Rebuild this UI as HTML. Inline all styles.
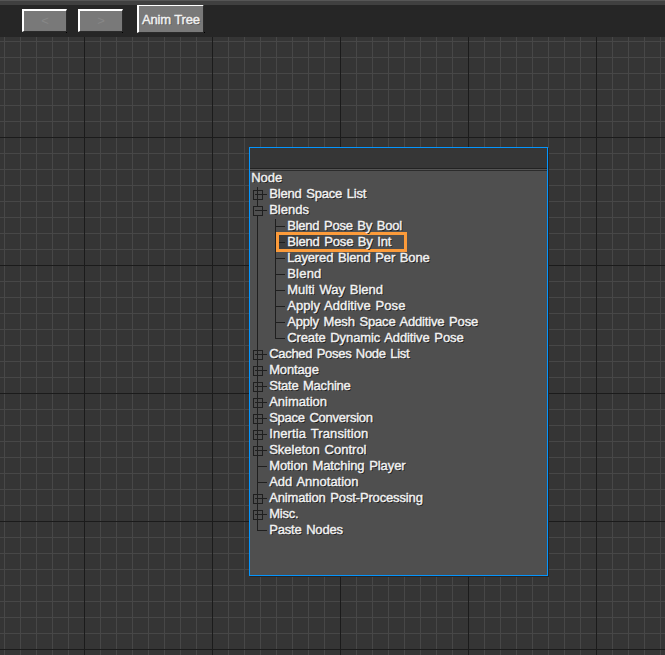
<!DOCTYPE html>
<html><head><meta charset="utf-8"><title>Anim Tree</title>
<style>
html,body{margin:0;padding:0}
body{width:665px;height:655px;overflow:hidden;position:relative;background:#353535;font-family:"Liberation Sans",sans-serif;font-size:13px;}
#grid{position:absolute;left:0;top:37px;width:665px;height:618px;background-color:#353535;
background-image:
 linear-gradient(to right,#1b1b1b 1px,transparent 1px),
 linear-gradient(to bottom,#1b1b1b 1px,transparent 1px),
 linear-gradient(to right,#474747 1px,transparent 1px),
 linear-gradient(to bottom,#474747 1px,transparent 1px);
background-size:128px 128px,128px 128px,16px 16px,16px 16px;
background-position:84px 0,0 100px,4px 0,0 4px;}
#bar{position:absolute;left:0;top:0;width:665px;height:37px;background:#262626}
#bar .s0{position:absolute;left:0;top:0;width:665px;height:1px;background:#565656}
#bar .s1{position:absolute;left:0;top:1px;width:665px;height:4px;background:#404040}
.btn{position:absolute;box-sizing:border-box;background:#797979;border-style:solid;border-color:#fff #2b2b2b #2b2b2b #fff;border-width:2px 1px 1px 2px;color:#878787;text-align:center;line-height:20px;font-size:13px}
.dot{position:absolute;width:1px;height:1px;background:#000}
#panel{position:absolute;left:249px;top:147px;width:297px;height:427px;border:1px solid #0495fe;background:#4f4f4f;box-shadow:1px 1px 0 #252525}
#field{position:absolute;left:250px;top:148px;width:297px;height:20px;background:#363636}
i{position:absolute;display:block;box-sizing:content-box}
.t{position:absolute;height:16px;line-height:16px;white-space:pre;color:#f2f2f2;text-shadow:1px 1px 0 #1c1c1c;-webkit-text-stroke:0.4px #f2f2f2}
.sel{position:absolute;border:3px solid #fc9b3a}
.selbg{position:absolute;background:linear-gradient(100deg,#3b3b3b,#4e4e4e 60%)}
</style></head><body>
<div id="grid"></div>
<div id="bar">
<div class="btn" style="left:22px;top:9px;width:45px;height:23px">&lt;</div>
<div class="btn" style="left:78px;top:9px;width:45px;height:23px">&gt;</div>
<div class="btn" style="left:137px;top:4px;width:67px;height:29px"></div>
<div class="dot" style="left:66px;top:32px"></div><div class="dot" style="left:122px;top:32px"></div><div class="dot" style="left:204px;top:32px"></div>
<div class="t" style="left:142px;top:12px;letter-spacing:-0.15px;text-shadow:1px 1px 0 #5a5a5a">Anim Tree</div>
<div class="s0"></div><div class="s1"></div>
</div>
<div id="panel"></div>
<div id="field"></div>
<i style="left:250px;top:168px;width:297px;height:1px;background:#222"></i>
<i style="left:250px;top:169px;width:297px;height:1px;background:#555"></i>
<i style="left:250px;top:170px;width:297px;height:1px;background:#2b2b2b"></i>
<div class="selbg" style="left:276px;top:232px;width:131px;height:20px"></div>
<i style="left:257px;top:187px;width:1px;height:344px;background:#1f1f1f;"></i><i style="left:275px;top:219px;width:1px;height:120px;background:#1f1f1f;"></i><i style="left:253px;top:190px;width:8px;height:8px;border:1px solid #1f1f1f;background:transparent"></i><i style="left:255px;top:194px;width:12px;height:1px;background:#1f1f1f;"></i><i style="left:253px;top:206px;width:8px;height:8px;border:1px solid #1f1f1f;background:#4f4f4f"></i><i style="left:255px;top:210px;width:12px;height:1px;background:#1f1f1f;"></i><i style="left:275px;top:226px;width:10px;height:1px;background:#1f1f1f;"></i><i style="left:275px;top:242px;width:10px;height:1px;background:#1f1f1f;"></i><i style="left:275px;top:258px;width:10px;height:1px;background:#1f1f1f;"></i><i style="left:275px;top:274px;width:10px;height:1px;background:#1f1f1f;"></i><i style="left:275px;top:290px;width:10px;height:1px;background:#1f1f1f;"></i><i style="left:275px;top:306px;width:10px;height:1px;background:#1f1f1f;"></i><i style="left:275px;top:322px;width:10px;height:1px;background:#1f1f1f;"></i><i style="left:275px;top:338px;width:10px;height:1px;background:#1f1f1f;"></i><i style="left:253px;top:350px;width:8px;height:8px;border:1px solid #1f1f1f;background:transparent"></i><i style="left:255px;top:354px;width:12px;height:1px;background:#1f1f1f;"></i><i style="left:253px;top:366px;width:8px;height:8px;border:1px solid #1f1f1f;background:transparent"></i><i style="left:255px;top:370px;width:12px;height:1px;background:#1f1f1f;"></i><i style="left:253px;top:382px;width:8px;height:8px;border:1px solid #1f1f1f;background:transparent"></i><i style="left:255px;top:386px;width:12px;height:1px;background:#1f1f1f;"></i><i style="left:253px;top:398px;width:8px;height:8px;border:1px solid #1f1f1f;background:transparent"></i><i style="left:255px;top:402px;width:12px;height:1px;background:#1f1f1f;"></i><i style="left:253px;top:414px;width:8px;height:8px;border:1px solid #1f1f1f;background:transparent"></i><i style="left:255px;top:418px;width:12px;height:1px;background:#1f1f1f;"></i><i style="left:253px;top:430px;width:8px;height:8px;border:1px solid #1f1f1f;background:transparent"></i><i style="left:255px;top:434px;width:12px;height:1px;background:#1f1f1f;"></i><i style="left:253px;top:446px;width:8px;height:8px;border:1px solid #1f1f1f;background:transparent"></i><i style="left:255px;top:450px;width:12px;height:1px;background:#1f1f1f;"></i><i style="left:257px;top:466px;width:10px;height:1px;background:#1f1f1f;"></i><i style="left:257px;top:482px;width:10px;height:1px;background:#1f1f1f;"></i><i style="left:253px;top:494px;width:8px;height:8px;border:1px solid #1f1f1f;background:transparent"></i><i style="left:255px;top:498px;width:12px;height:1px;background:#1f1f1f;"></i><i style="left:253px;top:510px;width:8px;height:8px;border:1px solid #1f1f1f;background:transparent"></i><i style="left:255px;top:514px;width:12px;height:1px;background:#1f1f1f;"></i><i style="left:257px;top:530px;width:10px;height:1px;background:#1f1f1f;"></i>
<div class="sel" style="left:276px;top:232px;width:125px;height:14px"></div>
<div class="t" style="left:251.2px;top:170px;letter-spacing:-0.000px;word-spacing:1.2px">Node</div><div class="t" style="left:269.2px;top:186px;letter-spacing:-0.180px;word-spacing:1.2px">Blend Space List</div><div class="t" style="left:269.2px;top:202px;letter-spacing:0.000px;word-spacing:1.2px">Blends</div><div class="t" style="left:287.2px;top:218px;letter-spacing:-0.212px;word-spacing:1.2px">Blend Pose By Bool</div><div class="t" style="left:287.2px;top:234px;letter-spacing:-0.169px;word-spacing:1.2px">Blend Pose By Int</div><div class="t" style="left:287.2px;top:250px;letter-spacing:-0.129px;word-spacing:1.2px">Layered Blend Per Bone</div><div class="t" style="left:287.2px;top:266px;letter-spacing:0.225px;word-spacing:1.2px">Blend</div><div class="t" style="left:287.2px;top:282px;letter-spacing:0.000px;word-spacing:1.2px">Multi Way Blend</div><div class="t" style="left:287.2px;top:298px;letter-spacing:0.050px;word-spacing:1.2px">Apply Additive Pose</div><div class="t" style="left:287.2px;top:314px;letter-spacing:-0.155px;word-spacing:1.2px">Apply Mesh Space Additive Pose</div><div class="t" style="left:287.2px;top:330px;letter-spacing:-0.100px;word-spacing:1.2px">Create Dynamic Additive Pose</div><div class="t" style="left:269.2px;top:346px;letter-spacing:-0.300px;word-spacing:1.2px">Cached Poses Node List</div><div class="t" style="left:269.2px;top:362px;letter-spacing:-0.150px;word-spacing:1.2px">Montage</div><div class="t" style="left:269.2px;top:378px;letter-spacing:-0.225px;word-spacing:1.2px">State Machine</div><div class="t" style="left:269.2px;top:394px;letter-spacing:-0.000px;word-spacing:1.2px">Animation</div><div class="t" style="left:269.2px;top:410px;letter-spacing:-0.240px;word-spacing:1.2px">Space Conversion</div><div class="t" style="left:269.2px;top:426px;letter-spacing:0.106px;word-spacing:1.2px">Inertia Transition</div><div class="t" style="left:269.2px;top:442px;letter-spacing:0.000px;word-spacing:1.2px">Skeleton Control</div><div class="t" style="left:269.2px;top:458px;letter-spacing:-0.086px;word-spacing:1.2px">Motion Matching Player</div><div class="t" style="left:269.2px;top:474px;letter-spacing:0.000px;word-spacing:1.2px">Add Annotation</div><div class="t" style="left:269.2px;top:490px;letter-spacing:-0.150px;word-spacing:1.2px">Animation Post-Processing</div><div class="t" style="left:269.2px;top:506px;letter-spacing:-0.225px;word-spacing:1.2px">Misc.</div><div class="t" style="left:269.2px;top:522px;letter-spacing:-0.180px;word-spacing:1.2px">Paste Nodes</div>
</body></html>
